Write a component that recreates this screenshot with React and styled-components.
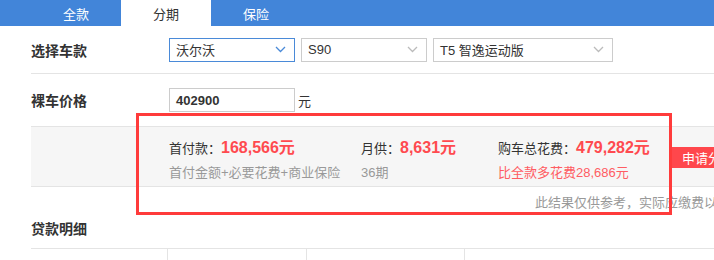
import React from 'react'
import styled, { createGlobalStyle } from 'styled-components'

const Global = createGlobalStyle`
    body {
        margin: 0;
        overflow: hidden;
        background: #fff;
        font-family: "Liberation Sans", "Noto Sans CJK SC", sans-serif;
        color: #333;
    }
`

const Page = styled.div`
    position: relative;
    width: 800px;
`

const TabBar = styled.div`
    display: flex;
    height: 26px;
    background: #4285d9;
    padding-left: 31px;
`

const Tab = styled.div`
    width: 90px;
    display: flex;
    align-items: center;
    justify-content: center;
    font-size: 13px;
    color: ${props => props.active ? '#333' : '#fff'};
    background: ${props => props.active ? '#fff' : 'transparent'};
`

const Body = styled.div`
    padding-left: 31px;
`

const Row = styled.div`
    display: flex;
    align-items: center;
    height: ${props => props.h}px;
    border-bottom: 1px solid #e4e4e4;
    box-sizing: border-box;
`

const Label = styled.div`
    width: 138px;
    font-size: 14px;
    font-weight: bold;
    color: #333;
`

const Select = styled.div`
    width: ${props => props.w}px;
    height: 24px;
    box-sizing: border-box;
    border: 1px solid ${props => props.focus ? '#4a8ad8' : '#ccc'};
    margin-right: 6px;
    display: flex;
    align-items: center;
    justify-content: space-between;
    padding: 0 8px 0 6px;
    font-size: 13px;
    color: #333;
`

const Input = styled.div`
    width: 126px;
    height: 24px;
    box-sizing: border-box;
    border: 1px solid #ccc;
    display: flex;
    align-items: center;
    padding-left: 6px;
    font-size: 13px;
    font-weight: bold;
    color: #333;
`

const Unit = styled.span`
    font-size: 13px;
    margin-left: 3px;
`

const Summary = styled.div`
    display: flex;
    align-items: center;
    height: 59px;
    background: #f6f6f6;
    border-bottom: 1px solid #e4e4e4;
    padding-left: 138px;
`

const Item = styled.div`
    width: ${props => props.w}px;
    display: flex;
    flex-direction: column;
    gap: 4px;
    padding-top: 2px;
`

const Main = styled.div`
    font-size: 13px;
    color: #333;
    white-space: nowrap;
    b {
        font-size: 16px;
        color: #ff4a4f;
    }
`

const Sub = styled.div`
    font-size: 13px;
    color: ${props => props.red ? '#ff5c62' : '#999'};
    white-space: nowrap;
`

const ApplyButton = styled.div`
    margin-left: 35px;
    height: 21px;
    padding: 0 12px;
    background: #ff474c;
    color: #fff;
    font-size: 13px;
    display: flex;
    align-items: center;
    margin-top: 2px;
`

const Note = styled.div`
    height: 28px;
    padding-left: 504px;
    display: flex;
    align-items: center;
    font-size: 13px;
    color: #999;
    white-space: nowrap;
`

const SectionTitle = styled.div`
    height: 33px;
    box-sizing: border-box;
    padding-bottom: 7px;
    display: flex;
    align-items: center;
    font-size: 14px;
    font-weight: bold;
`

const Table = styled.div`
    display: grid;
    grid-template-columns: 137px 139px 158px 1fr;
    border-top: 1px solid #e4e4e4;
    height: 20px;
`

const Cell = styled.div`
    border-right: 1px solid #e4e4e4;
`

const Highlight = styled.div`
    position: absolute;
    left: 136px;
    top: 113px;
    width: 536px;
    height: 102px;
    box-sizing: border-box;
    border: 3px solid #ff3b3b;
    pointer-events: none;
`

const Chevron = ({ color }) => (
    <svg width="11" height="7" viewBox="0 0 11 7">
        <path d="M1 1l4.5 4.5L10 1" fill="none" stroke={color} strokeWidth="1.3" />
    </svg>
)

const App = () => {
    return (
        <Page>
            <Global />
            <TabBar>
                <Tab>全款</Tab>
                <Tab active>分期</Tab>
                <Tab>保险</Tab>
            </TabBar>
            <Body>
                <Row h={48}>
                    <Label>选择车款</Label>
                    <Select w={126} focus>沃尔沃<Chevron color="#4a8ad8" /></Select>
                    <Select w={126}>S90<Chevron color="#bbb" /></Select>
                    <Select w={180}>T5 智逸运动版<Chevron color="#bbb" /></Select>
                </Row>
                <Row h={53}>
                    <Label>裸车价格</Label>
                    <Input>402900</Input>
                    <Unit>元</Unit>
                </Row>
                <Summary>
                    <Item w={192}>
                        <Main>首付款：<b>168,566元</b></Main>
                        <Sub>首付金额+必要花费+商业保险</Sub>
                    </Item>
                    <Item w={137}>
                        <Main>月供：<b>8,631元</b></Main>
                        <Sub>36期</Sub>
                    </Item>
                    <Item w={137}>
                        <Main>购车总花费：<b>479,282元</b></Main>
                        <Sub red>比全款多花费28,686元</Sub>
                    </Item>
                    <ApplyButton>申请分期</ApplyButton>
                </Summary>
                <Note>此结果仅供参考，实际应缴费以当地为准</Note>
                <SectionTitle>贷款明细</SectionTitle>
                <Table>
                    <Cell />
                    <Cell />
                    <Cell />
                    <div />
                </Table>
            </Body>
            <Highlight />
        </Page>
    )
}

export default App
